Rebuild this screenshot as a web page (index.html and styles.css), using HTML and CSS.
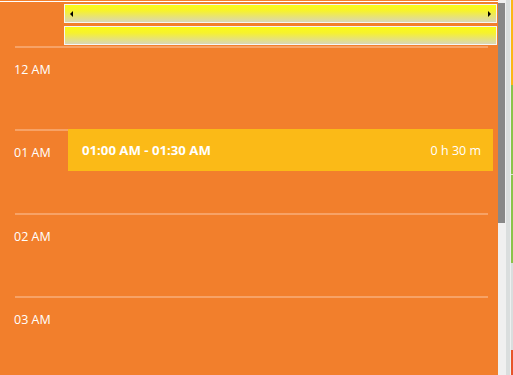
FILE: index.html
```html
<!DOCTYPE html>
<html>
<head>
<meta charset="utf-8">
<link rel="stylesheet" href="styles.css">
</head>
<body>
<div class="screen">
  <div class="calendar">
    <div class="topline"></div>
    <div class="header">
      <div class="hbar">
        <span class="arrow arrow-left"></span>
        <span class="arrow arrow-right"></span>
      </div>
      <div class="hbar"></div>
    </div>
    <div class="rows">
      <div class="row"><div class="label">12 AM</div></div>
      <div class="row">
        <div class="label">01 AM</div>
        <div class="event">
          <span class="event-time">01:00 AM - 01:30 AM</span>
          <span class="event-dur">0 h 30 m</span>
        </div>
      </div>
      <div class="row"><div class="label">02 AM</div></div>
      <div class="row"><div class="label">03 AM</div></div>
    </div>
  </div>
  <div class="scrollbar"><div class="thumb"></div></div>
  <div class="side"></div>
  <div class="side-gap"></div>
  <div class="strip">
    <div class="seg seg-yellow"></div>
    <div class="seg seg-green1"></div>
    <div class="seg seg-break"></div>
    <div class="seg seg-green2"></div>
    <div class="seg seg-grey"></div>
    <div class="seg seg-red"></div>
  </div>
</div>
</body>
</html>
```

FILE: styles.css
```css
html, body {
  margin: 0;
  padding: 0;
}
body {
  width: 513px;
  height: 375px;
  overflow: hidden;
  font-family: "Open Sans", "Noto Sans", sans-serif;
}
.screen {
  display: flex;
  width: 513px;
  height: 375px;
}
.calendar {
  width: 498px;
  height: 375px;
  background: #f27f2c;
  overflow: hidden;
  flex: none;
}
.topline {
  margin-top: 1px;
  height: 1px;
  background: #fff;
}
.header {
  display: flex;
  flex-direction: column;
  gap: 3px;
  padding: 2px 1px 1px 64px;
}
.hbar {
  height: 17px;
  border: 1px solid #f6f6f6;
  background: linear-gradient(#fbfb16 0%, #f6f22e 35%, #e9e46e 65%, #d9d7b5 100%);
  display: flex;
  align-items: center;
  justify-content: space-between;
  padding: 0 5px;
}
.arrow {
  width: 0;
  height: 0;
  border-top: 3.5px solid transparent;
  border-bottom: 3.5px solid transparent;
}
.arrow-left {
  border-right: 3.5px solid #000;
}
.arrow-right {
  border-left: 3.5px solid #000;
}
.rows {
  display: flex;
  flex-direction: column;
}
.row {
  position: relative;
  height: calc(250px / 3);
  flex: none;
}
.row::before {
  content: "";
  display: block;
  height: 2px;
  margin: 0 10px 0 15px;
  background: #f7a266;
}
.label {
  padding: 14px 0 0 14px;
  font-size: 12.5px;
  line-height: 16px;
  color: #fff;
}
.event {
  position: absolute;
  top: 0;
  left: 68px;
  right: 5px;
  height: 42px;
  background: #fbba17;
  color: #fff;
  display: flex;
  align-items: center;
  justify-content: space-between;
  padding: 0 12px 0 14px;
}
.event-time {
  font-weight: 700;
  font-size: 13.2px;
}
.event-dur {
  font-size: 12.5px;
}
.scrollbar {
  width: 7px;
  flex: none;
  background: #f0f0f0;
  padding-top: 3px;
}
.thumb {
  height: 220px;
  background: #888888;
}
.side {
  width: 1px;
  flex: none;
  background: #f0f0f0;
  border-right: 4px solid #dadede;
}
.side-gap {
  width: 1px;
  flex: none;
  background: #eef0f0;
}
.strip {
  width: 2px;
  flex: none;
  display: flex;
  flex-direction: column;
}
.seg { flex: none; }
.seg-yellow { height: 85px; background: #fbb715; }
.seg-green1 { height: 89px; background: #8bc34a; }
.seg-break { height: 1px; background: #dfe6d8; }
.seg-green2 { height: 88px; background: #8bc34a; }
.seg-grey { height: 87px; background: #dadede; }
.seg-red { height: 25px; background: #e8542a; }
```
